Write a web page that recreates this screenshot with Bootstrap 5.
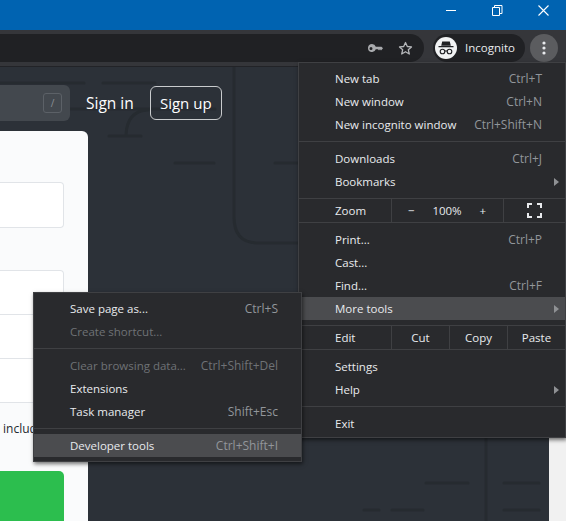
<!DOCTYPE html>
<html lang="en">
<head>
  <meta charset="UTF-8">
  <title>Chrome menu</title>
  <link href="https://cdn.jsdelivr.net/npm/bootstrap@5.3.3/dist/css/bootstrap.min.css" rel="stylesheet">
  <style>
    html, body { height: 521px; overflow: hidden; }
    body { font-family: "Open Sans", "Liberation Sans", sans-serif; background: #2c3138; position: relative; }
    .title-strip { height: 30px; background: #0063b1; }
    .title-strip svg { display: block; }
    .tool-strip { height: 37px; background: #35363a; padding-top: 4px; border-bottom: 1px solid #222327; }
    .omnibox { width: 424px; height: 28px; background: #202124; border-radius: 0 14px 14px 0; padding-right: 11px; gap: 15px; }
    .incog-pill { width: 92px; height: 28px; margin-left: 9px; background: #202124; border-radius: 14px; padding-left: 2px; color: #e8eaed; font-size: 11.5px; gap: 8px; }
    .incog-face { width: 22px; height: 22px; background: #f1f3f4; border-radius: 50%; }
    .dots-btn { width: 28px; height: 28px; margin-left: 5px; background: #5b5c5f; border-radius: 50%; }
    .page-area { height: 454px; }
    .page-main { width: 549px; position: relative; overflow: hidden; }
    .page-lines { position: absolute; left: 0; top: 0; }
    .page-lines path { fill: none; stroke: #262b30; stroke-width: 3; stroke-linecap: round; }
    .scroll-strip { width: 17px; background: #f1f1f1; }
    .page-content { position: relative; }
    .head-row { height: 64px; padding-top: 18px; color: #fff; font-size: 15.5px; }
    .search-box { width: 70px; height: 36px; background: #43484e; border-radius: 0 6px 6px 0; padding-right: 8px; }
    .slash-key { width: 19px; height: 20px; border: 1px solid #5c6167; border-radius: 3px; color: #8b9096; font-size: 10px; }
    .signin-link { margin-left: 16px; height: 38px; }
    .signup-btn { margin-left: 16px; margin-top: 1px; width: 72px; height: 34px; border: 1px solid #c9cbcd; border-radius: 6px; font-size: 15px; }
    .form-panel { width: 88px; height: 390px; background: #fafbfc; border-radius: 0 6px 0 0; padding: 51px 24px 0 0; color: #24292e; font-size: 12px; }
    .field-one { height: 46px; background: #fff; border: 1px solid #e1e4e8; border-left: 0; border-radius: 0 4px 4px 0; }
    .field-group { height: 133px; margin-top: 42px; background: #fff; border: 1px solid #e1e4e8; border-left: 0; border-radius: 0 4px 4px 0; }
    .field-row { height: 44px; border-bottom: 1px solid #e1e4e8; }
    .field-row:last-child { border-bottom: 0; }
    .terms-line { height: 68px; padding: 17px 0 0 3px; white-space: nowrap; }
    .green-btn { height: 50px; background: #2cbe4e; border-radius: 0 5px 0 0; }
    .chrome-menu.dropdown-menu { background: #292a2d; border: 1px solid #3f4043; border-radius: 0; padding: 4px 0; min-width: 0; font-size: 11.5px; box-shadow: 1px 2px 4px rgba(0,0,0,.55); }
    .main-menu.dropdown-menu { left: 298px; top: 62px; width: 268px; padding-bottom: 2px; }
    .side-menu.dropdown-menu { left: 33px; top: 292px; width: 269px; }
    .chrome-menu .dropdown-item { height: 23px; padding: 0 23px 0 36px; color: #e8eaed; line-height: 1; }
    .chrome-menu .dropdown-item:hover { background: transparent; color: #e8eaed; }
    .chrome-menu .dropdown-item.hot, .chrome-menu .dropdown-item.hot:hover { background: #4b4c4f; }
    .chrome-menu .dropdown-item.off { color: #6f7276; }
    .chrome-menu .dropdown-divider { margin: 5px 0; border-top: 1px solid #3f4043; opacity: 1; }
    .chrome-menu .dropdown-divider.tight-b { margin-bottom: 0; }
    .chrome-menu .dropdown-divider.tight-t { margin-top: 0; }
    .key-hint { color: #92969b; font-size: 12px; }
    .off .key-hint { color: #6f7276; }
    .more-arrow { width: 0; height: 0; margin-right: -17px; border-left: 5px solid #8f9194; border-top: 4px solid transparent; border-bottom: 4px solid transparent; }
    .cell-row { height: 23px; color: #e8eaed; }
    .cell-label { width: 92px; padding-left: 36px; }
    .cell-zoom { width: 112px; border-left: 1px solid #3f4043; padding: 0 17px 0 16px; }
    .cell-full { flex: 1; border-left: 1px solid #3f4043; padding-left: 23px; }
    .cell-edit { width: 58px; border-left: 1px solid #3f4043; }
  </style>
</head>
<body>
  <div class="title-strip d-flex justify-content-end align-items-start">
    <svg width="120" height="20" viewBox="0 0 120 20">
      <path d="M0 10.5h10" stroke="#fff" fill="none"/>
      <path d="M46.5 7.5h7v8h-7zM48.5 7V5.5h7.5v8H54" stroke="#fff" fill="none"/>
      <path d="M92.5 5.5l10 10M102.5 5.5l-10 10" stroke="#fff" fill="none" stroke-width="1.1"/>
    </svg>
  </div>

  <div class="tool-strip d-flex">
    <div class="omnibox d-flex justify-content-end align-items-center">
      <svg width="15" height="9" viewBox="0 0 15 9">
        <path d="M4 0a4 4 0 1 0 3.8 5.3H10l1 1.2 1-1.2 1 1.2 2-2.2-1.5-1.6H7.8A4 4 0 0 0 4 0zm-1 3a1.5 1.5 0 1 1 0 3 1.5 1.5 0 0 1 0-3z" fill="#a9abae" fill-rule="evenodd"/>
      </svg>
      <svg width="15" height="15" viewBox="0 0 15 15">
        <path d="M7.5 1.5l1.8 4 4.2.4-3.2 2.8 1 4.3-3.8-2.3-3.8 2.3 1-4.3L1.5 5.9l4.2-.4z" fill="none" stroke="#b4b6b9" stroke-width="1.3" stroke-linejoin="round"/>
      </svg>
    </div>
    <div class="incog-pill d-flex align-items-center">
      <div class="incog-face d-flex align-items-center justify-content-center">
        <svg width="16" height="14" viewBox="0 0 16 14">
          <path d="M4.2 0.5h7.6l1 4.3H3.2zM0.5 5h15v1.3H.5z" fill="#202124"/>
          <circle cx="4.5" cy="10.5" r="2.3" fill="none" stroke="#202124" stroke-width="1.1"/>
          <circle cx="11.5" cy="10.5" r="2.3" fill="none" stroke="#202124" stroke-width="1.1"/>
          <path d="M6.8 10h2.4" stroke="#202124" stroke-width="1.1"/>
        </svg>
      </div>
      <span>Incognito</span>
    </div>
    <div class="dots-btn d-flex align-items-center justify-content-center">
      <svg width="4" height="14" viewBox="0 0 4 14">
        <circle cx="2" cy="2" r="1.6" fill="#e8eaed"/>
        <circle cx="2" cy="7" r="1.6" fill="#e8eaed"/>
        <circle cx="2" cy="12" r="1.6" fill="#e8eaed"/>
      </svg>
    </div>
  </div>

  <div class="page-area d-flex">
    <div class="page-main">
      <svg class="page-lines" width="549" height="454" viewBox="0 67 549 454">
        <path d="M0 83h84M103 83h52"/>
        <path d="M70 109h145M148 110Q127 111 126 135M109 136h32"/>
        <path d="M175 163h39M275 163h23"/>
        <path d="M234 67V217Q234 243 258 243H298"/>
        <path d="M486 438V521M426 483h42M504 483h35M364 510h15M392 510h31M504 510h35"/>
      </svg>
      <div class="page-content">
        <div class="head-row d-flex align-items-start">
          <div class="search-box d-flex align-items-center justify-content-end">
            <span class="slash-key d-flex align-items-center justify-content-center">/</span>
          </div>
          <span class="signin-link d-flex align-items-center">Sign in</span>
          <span class="signup-btn d-flex align-items-center justify-content-center">Sign up</span>
        </div>
        <div class="form-panel">
          <div class="field-one"></div>
          <div class="field-group">
            <div class="field-row"></div>
            <div class="field-row"></div>
            <div class="field-row"></div>
          </div>
          <div class="terms-line">includes</div>
          <div class="green-btn"></div>
        </div>
      </div>
    </div>
    <div class="scroll-strip"></div>
  </div>

  <div class="chrome-menu main-menu dropdown-menu show">
    <div class="dropdown-item d-flex align-items-center justify-content-between"><span>New tab</span><span class="key-hint">Ctrl+T</span></div>
    <div class="dropdown-item d-flex align-items-center justify-content-between"><span>New window</span><span class="key-hint">Ctrl+N</span></div>
    <div class="dropdown-item d-flex align-items-center justify-content-between"><span>New incognito window</span><span class="key-hint">Ctrl+Shift+N</span></div>
    <div class="dropdown-divider"></div>
    <div class="dropdown-item d-flex align-items-center justify-content-between"><span>Downloads</span><span class="key-hint">Ctrl+J</span></div>
    <div class="dropdown-item d-flex align-items-center justify-content-between"><span>Bookmarks</span><span class="more-arrow"></span></div>
    <div class="dropdown-divider tight-b"></div>
    <div class="cell-row d-flex align-items-stretch">
      <div class="cell-label d-flex align-items-center">Zoom</div>
      <div class="cell-zoom d-flex align-items-center justify-content-between"><span>−</span><span>100%</span><span>+</span></div>
      <div class="cell-full d-flex align-items-center">
        <svg width="15" height="15" viewBox="0 0 15 15">
          <path d="M1 5V1h4M10 1h4v4M14 10v4h-4M5 14H1v-4" fill="none" stroke="#e8eaed" stroke-width="2"/>
        </svg>
      </div>
    </div>
    <div class="dropdown-divider tight-t"></div>
    <div class="dropdown-item d-flex align-items-center justify-content-between"><span>Print...</span><span class="key-hint">Ctrl+P</span></div>
    <div class="dropdown-item d-flex align-items-center"><span>Cast...</span></div>
    <div class="dropdown-item d-flex align-items-center justify-content-between"><span>Find...</span><span class="key-hint">Ctrl+F</span></div>
    <div class="dropdown-item hot d-flex align-items-center justify-content-between"><span>More tools</span><span class="more-arrow"></span></div>
    <div class="dropdown-divider tight-b"></div>
    <div class="cell-row d-flex align-items-stretch">
      <div class="cell-label d-flex align-items-center">Edit</div>
      <div class="cell-edit d-flex align-items-center justify-content-center">Cut</div>
      <div class="cell-edit d-flex align-items-center justify-content-center">Copy</div>
      <div class="cell-edit d-flex align-items-center justify-content-center">Paste</div>
    </div>
    <div class="dropdown-divider tight-t"></div>
    <div class="dropdown-item d-flex align-items-center"><span>Settings</span></div>
    <div class="dropdown-item d-flex align-items-center justify-content-between"><span>Help</span><span class="more-arrow"></span></div>
    <div class="dropdown-divider"></div>
    <div class="dropdown-item d-flex align-items-center"><span>Exit</span></div>
  </div>

  <div class="chrome-menu side-menu dropdown-menu show">
    <div class="dropdown-item d-flex align-items-center justify-content-between"><span>Save page as...</span><span class="key-hint">Ctrl+S</span></div>
    <div class="dropdown-item off d-flex align-items-center"><span>Create shortcut...</span></div>
    <div class="dropdown-divider"></div>
    <div class="dropdown-item off d-flex align-items-center justify-content-between"><span>Clear browsing data...</span><span class="key-hint">Ctrl+Shift+Del</span></div>
    <div class="dropdown-item d-flex align-items-center"><span>Extensions</span></div>
    <div class="dropdown-item d-flex align-items-center justify-content-between"><span>Task manager</span><span class="key-hint">Shift+Esc</span></div>
    <div class="dropdown-divider"></div>
    <div class="dropdown-item hot d-flex align-items-center justify-content-between"><span>Developer tools</span><span class="key-hint">Ctrl+Shift+I</span></div>
  </div>

  <script src="https://cdn.jsdelivr.net/npm/bootstrap@5.3.3/dist/js/bootstrap.bundle.min.js"></script>
</body>
</html>
